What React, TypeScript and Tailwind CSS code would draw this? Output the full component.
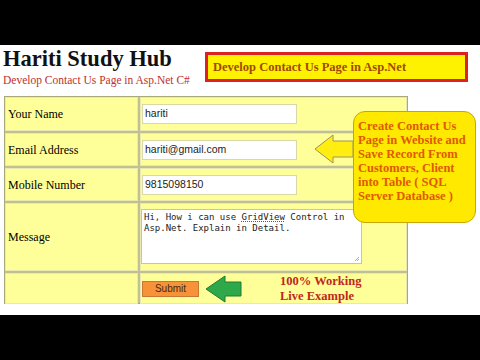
import React from "react";

const serif = { fontFamily: '"Liberation Serif", "Times New Roman", serif' };

function Label({ children }: { children: React.ReactNode }) {
  return (
    <div className="bg-[#ffff99] border border-[#e8e8b0] flex items-center pl-[2px] text-[12px] text-black" style={serif}>
      {children}
    </div>
  );
}

function InputCell({ value }: { value: string }) {
  return (
    <div className="bg-[#ffff99] border border-[#e8e8b0] flex items-center pl-[1px]">
      <div className="w-[155px] h-[20px] bg-white border border-[#d8d8a8] flex items-center pl-[2px] text-[10.5px] text-[#222] font-['Liberation_Sans',Arial,sans-serif]">
        {value}
      </div>
    </div>
  );
}

export default function App() {
  return (
    <div className="w-[480px] h-[360px] bg-black flex flex-col overflow-hidden">
      <div className="h-[45px] shrink-0 bg-black" />
      <div className="relative h-[270px] shrink-0 bg-white">
        {/* Header */}
        <div className="flex items-start h-[51px]">
          <div className="w-[202px] shrink-0 pl-[3px] pt-[2px] whitespace-nowrap" style={serif}>
            <div className="text-[22.5px] font-bold leading-[24px] text-[#111]">Hariti Study Hub</div>
            <div className="text-[11.5px] leading-[14px] text-[#c0302c] mt-[2px]">Develop Contact Us Page in Asp.Net C#</div>
          </div>
          <div
            className="ml-[3px] mt-[7px] w-[263px] h-[30px] bg-[#fff200] border-[3px] border-[#dd2020] flex items-center pl-[5px] pt-[1px] text-[12.5px] font-bold text-[#a04a00] whitespace-nowrap"
            style={serif}
          >
            Develop Contact Us Page in Asp.Net
          </div>
        </div>

        {/* Table */}
        <div className="ml-[4px] w-[404px] h-[208px] bg-[#a8a878] p-[1px]">
          <div className="grid grid-cols-[133px_1fr] grid-rows-[34px_33px_33px_68px_31px] gap-[2px] h-full bg-[#c0c090]">
            <Label>Your Name</Label>
            <InputCell value="hariti" />
            <Label>Email Address</Label>
            <InputCell value="hariti@gmail.com" />
            <Label>Mobile Number</Label>
            <InputCell value="9815098150" />
            <Label>Message</Label>
            <div className="bg-[#ffff99] border border-[#e8e8b0] flex items-start pt-[5px] pl-[0px]">
              <div className="relative w-[221px] h-[55px] bg-white border border-[#c8c8a0] pl-[2px] pt-[2px] text-[9px] leading-[11px] text-[#222] font-['DejaVu_Sans_Mono',monospace] whitespace-nowrap">
                <div>
                  Hi, How i can use{" "}
                  <span className="underline decoration-dotted decoration-[#e02020]">GridView</span> Control in
                </div>
                <div>Asp.Net. Explain in Detail.</div>
                <svg className="absolute right-[1px] bottom-[1px]" width="6" height="6" viewBox="0 0 6 6">
                  <path d="M5 1 L1 5 M5 3 L3 5" stroke="#999" strokeWidth="0.8" />
                </svg>
              </div>
            </div>
            <div className="bg-[#ffff99] border border-[#e8e8b0]" />
            <div className="bg-[#ffff99] border border-[#e8e8b0] flex items-center pl-[1px]">
              <div className="w-[57px] h-[16px] bg-[#f7923a] border border-[#c87830] flex items-center justify-center text-[10px] text-[#4a2a10] font-['Liberation_Sans',Arial,sans-serif]">
                Submit
              </div>
              <svg className="ml-[6px]" width="37" height="28" viewBox="0 0 37 28">
                <polygon points="1,14 20,1 20,7 36,7 36,21 20,21 20,27" fill="#2fa84a" stroke="#1f7a34" strokeWidth="1" />
              </svg>
              <div className="ml-[38px] text-[12.5px] font-bold leading-[15px] text-[#c0281c]" style={serif}>
                <div>100% Working</div>
                <div>Live Example</div>
              </div>
            </div>
          </div>
        </div>

        {/* Yellow arrow */}
        <svg className="absolute left-[314px] top-[89px]" width="40" height="30" viewBox="0 0 40 30">
          <polygon points="1,15 19,1 19,7 39,7 39,23 19,23 19,29" fill="#ffee10" stroke="#a09060" strokeWidth="1" />
        </svg>

        {/* Callout */}
        <div
          className="absolute left-[353px] top-[66px] w-[123px] h-[112px] rounded-[12px] bg-[#ffe900] border border-[#c8a800] pl-[4px] pt-[7px] text-[12.5px] font-bold leading-[14px] text-[#e05a00]"
          style={serif}
        >
          <div>Create Contact Us</div>
          <div>Page in Website and</div>
          <div>Save Record From</div>
          <div>Customers, Client</div>
          <div>into Table ( SQL</div>
          <div>Server Database )</div>
        </div>
      </div>
      <div className="flex-1 bg-black" />
    </div>
  );
}
